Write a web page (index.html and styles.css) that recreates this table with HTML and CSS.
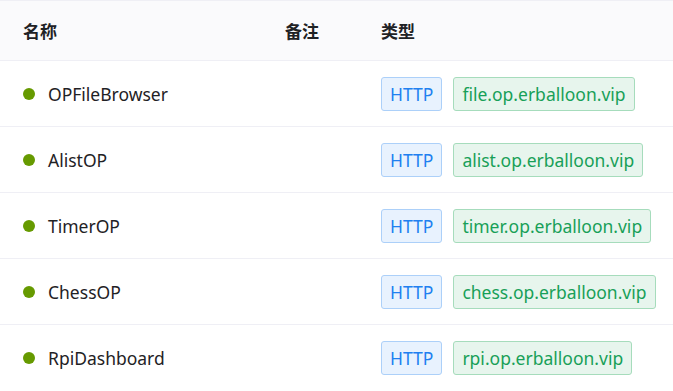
FILE: index.html
```html
<!DOCTYPE html>
<html lang="zh">
<head>
<meta charset="utf-8">
<link rel="stylesheet" href="styles.css">
</head>
<body>
<div class="table">
  <div class="row head">
    <div class="cell">名称</div>
    <div class="cell">备注</div>
    <div class="cell">类型</div>
  </div>
  <div class="row">
    <div class="cell name"><span class="dot"></span>OPFileBrowser</div>
    <div class="cell"></div>
    <div class="cell tags"><span class="tag info">HTTP</span><span class="tag ok">file.op.erballoon.vip</span></div>
  </div>
  <div class="row">
    <div class="cell name"><span class="dot"></span>AlistOP</div>
    <div class="cell"></div>
    <div class="cell tags"><span class="tag info">HTTP</span><span class="tag ok">alist.op.erballoon.vip</span></div>
  </div>
  <div class="row">
    <div class="cell name"><span class="dot"></span>TimerOP</div>
    <div class="cell"></div>
    <div class="cell tags"><span class="tag info">HTTP</span><span class="tag ok">timer.op.erballoon.vip</span></div>
  </div>
  <div class="row">
    <div class="cell name"><span class="dot"></span>ChessOP</div>
    <div class="cell"></div>
    <div class="cell tags"><span class="tag info">HTTP</span><span class="tag ok">chess.op.erballoon.vip</span></div>
  </div>
  <div class="row last">
    <div class="cell name"><span class="dot"></span>RpiDashboard</div>
    <div class="cell"></div>
    <div class="cell tags"><span class="tag info">HTTP</span><span class="tag ok">rpi.op.erballoon.vip</span></div>
  </div>
</div>
</body>
</html>
```
FILE: styles.css
```css
html, body {
  margin: 0;
  padding: 0;
  background: #fff;
}
body {
  font-family: "Noto Sans", "Noto Sans CJK SC", sans-serif;
  font-size: 17.5px;
  color: #1f2225;
}
.table {
  width: 673px;
  border-top: 1px solid #efeff5;
}
.row {
  display: grid;
  grid-template-columns: 262px 96px 1fr;
  height: 65px;
  border-bottom: 1px solid #efeff5;
  align-items: center;
}
.row.head {
  height: 59px;
  background: #fafafc;
  font-family: "Noto Sans CJK SC", sans-serif;
  font-weight: 700;
  font-size: 17px;
  color: #1f2225;
}
.row.last {
  border-bottom: none;
}
.cell {
  padding-left: 23px;
  display: flex;
  align-items: center;
  white-space: nowrap;
}
.dot {
  width: 12px;
  height: 12px;
  border-radius: 50%;
  background: #669a00;
  margin-right: 13px;
  flex: none;
}
.tags {
  gap: 11px;
}
.tag {
  box-sizing: border-box;
  height: 34px;
  display: inline-flex;
  align-items: center;
  padding: 0 8px;
  border-radius: 3px;
  font-size: 17.5px;
}
.tag.info {
  color: #2080f0;
  background: #e8f2fe;
  border: 1px solid #acd0f9;
}
.tag.ok {
  color: #18a058;
  background: #e7f5ed;
  border: 1px solid #a6dcbc;
}
```
